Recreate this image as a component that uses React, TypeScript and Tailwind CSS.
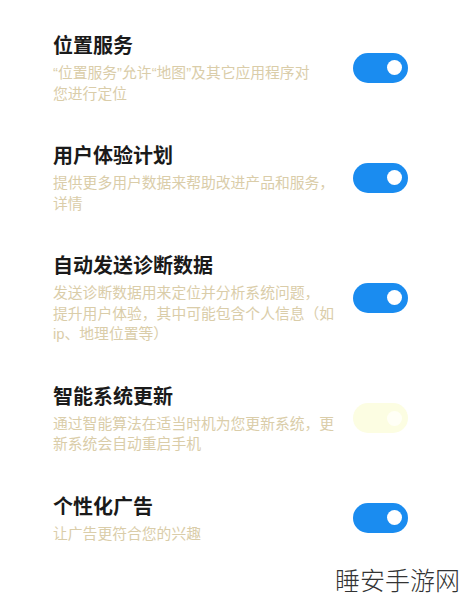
import { useState } from 'react';

interface SettingItem {
  title: string;
  lines: string[];
  enabled: boolean;
  faded?: boolean;
}

const SETTINGS: SettingItem[] = [
  {
    title: '位置服务',
    lines: ['“位置服务”允许“地图”及其它应用程序对', '您进行定位'],
    enabled: true,
  },
  {
    title: '用户体验计划',
    lines: ['提供更多用户数据来帮助改进产品和服务，', '详情'],
    enabled: true,
  },
  {
    title: '自动发送诊断数据',
    lines: ['发送诊断数据用来定位并分析系统问题，', '提升用户体验，其中可能包含个人信息（如', 'ip、地理位置等）'],
    enabled: true,
  },
  {
    title: '智能系统更新',
    lines: ['通过智能算法在适当时机为您更新系统，更', '新系统会自动重启手机'],
    enabled: false,
    faded: true,
  },
  {
    title: '个性化广告',
    lines: ['让广告更符合您的兴趣'],
    enabled: true,
  },
];

function Toggle({ on, faded, onClick }: { on: boolean; faded?: boolean; onClick(): void }) {
  return (
    <button
      className={`flex h-[30px] w-[55px] shrink-0 items-center rounded-full px-[6px] ${
        faded ? 'bg-[#fcfde2]' : on ? 'bg-[#1a8cf0]' : 'bg-[#e3e3e3]'
      } ${on || faded ? 'justify-end' : 'justify-start'}`}
      onClick={onClick}
      type="button"
    >
      <span className={`block h-[15px] w-[15px] rounded-full ${faded ? 'bg-[#fffff6]' : 'bg-white'}`} />
    </button>
  );
}

export default function App() {
  const [items, setItems] = useState(SETTINGS);

  const toggle = (index: number) => {
    setItems((prev) => prev.map((item, i) => (i === index ? { ...item, enabled: !item.enabled } : item)));
  };

  return (
    <div
      className="relative h-[600px] w-[459px] overflow-hidden bg-white"
      style={{ fontFamily: '"Noto Sans CJK SC", "Noto Sans", sans-serif' }}
    >
      <div className="flex flex-col gap-[37px] pl-[53px] pr-[51px] pt-[31px]">
        {items.map((item, index) => (
          <div className="flex items-center justify-between" key={item.title}>
            <div className="w-[290px]">
              <div className="text-[20px] font-bold leading-[28px] text-[#1a1a1a]">{item.title}</div>
              <p
                className="mt-[4px] whitespace-nowrap text-[14.8px] leading-[20.5px] text-[#dacda9]"
                style={{ fontFamily: '"Liberation Sans", "Noto Sans CJK SC", sans-serif' }}
              >
                {item.lines.map((line, i) => (
                  <span className="block" key={i}>
                    {line}
                  </span>
                ))}
              </p>
            </div>
            <Toggle faded={item.faded} on={item.enabled} onClick={() => toggle(index)} />
          </div>
        ))}
      </div>
      <div className="absolute left-[335px] top-[563px] whitespace-nowrap text-[25px] font-light leading-[32px] text-[#333333]">
        睡安手游网
      </div>
    </div>
  );
}
